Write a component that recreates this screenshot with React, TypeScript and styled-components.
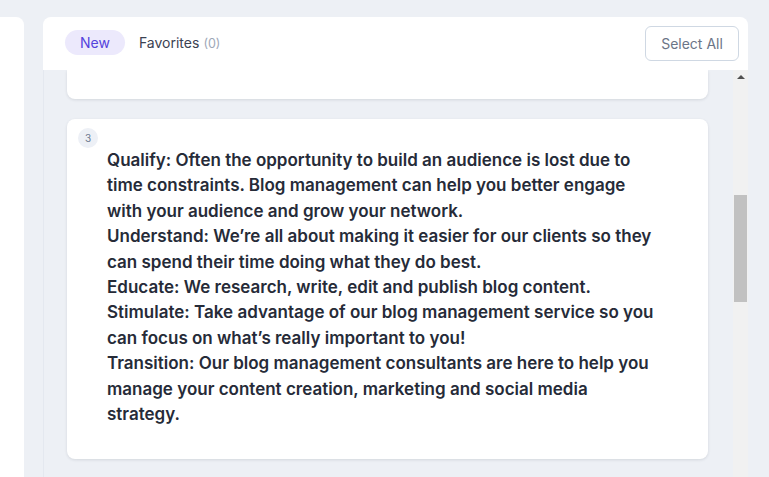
import { ReactElement } from 'react'
import styled, { createGlobalStyle } from 'styled-components'

const GlobalStyle = createGlobalStyle`
  html, body {
    margin: 0;
    padding: 0;
    background: #edf0f5;
    font-family: Inter, 'Noto Sans', sans-serif;
    overflow: hidden;
  }
`

const Page = styled.div`
  display: flex;
  gap: 19px;
  height: 477px;
  padding-top: 17px;
  box-sizing: border-box;
  background: #edf0f5;
`

const SidePanel = styled.aside`
  width: 24px;
  background: #fff;
  border-top-right-radius: 8px;
`

const MainPanel = styled.section`
  width: 705px;
  display: flex;
  flex-direction: column;
  min-height: 0;
`

const Header = styled.header`
  height: 53px;
  flex-shrink: 0;
  display: flex;
  align-items: center;
  padding: 0 9px 0 22px;
  background: #fff;
  border-radius: 8px 8px 0 0;
  box-sizing: border-box;
`

const Tab = styled.button<{ $active?: boolean }>`
  height: 25px;
  margin-bottom: 2px;
  padding: 0 ${(p) => (p.$active ? '15px' : '0')};
  margin-right: ${(p) => (p.$active ? '14px' : '0')};
  border: none;
  border-radius: 13px;
  background: ${(p) => (p.$active ? '#ece9fc' : 'transparent')};
  color: ${(p) => (p.$active ? '#5443dc' : '#3b4252')};
  font-family: Inter, sans-serif;
  font-size: 14px;
  cursor: pointer;
`

const Count = styled.span`
  color: #9ea8b8;
  font-size: 12.5px;
  margin-left: 4px;
`

const SelectAll = styled.button`
  margin-left: auto;
  margin-bottom: 1px;
  width: 94px;
  height: 35px;
  border: 1px solid #cfd8e3;
  border-radius: 6px;
  background: #fff;
  color: #6b7587;
  font-family: Inter, sans-serif;
  font-size: 14px;
`

const Body = styled.div`
  flex: 1;
  display: flex;
  min-height: 0;
  border-left: 1px solid #e4e8ef;
`

const List = styled.div`
  flex: 1;
  display: flex;
  flex-direction: column;
  gap: 20px;
  padding: 0 25px 0 23px;
  overflow: hidden;
`

const Card = styled.article<{ $cut?: boolean }>`
  flex-shrink: 0;
  background: #fff;
  border-radius: ${(p) => (p.$cut ? '0 0 8px 8px' : '8px')};
  box-shadow: 0 1px 3px rgba(30, 40, 60, 0.12);
  height: ${(p) => (p.$cut ? '29px' : 'auto')};
  padding: ${(p) => (p.$cut ? '0' : '9px 40px 32px 11px')};
  box-sizing: border-box;
`

const Index = styled.div`
  width: 20px;
  height: 20px;
  border-radius: 50%;
  background: #edf0f6;
  color: #6c7a90;
  font-size: 10px;
  display: flex;
  align-items: center;
  justify-content: center;
`

const Content = styled.div`
  margin-left: 29px;
  color: #262b38;
  font-family: Inter, sans-serif;
  font-weight: 600;
  font-size: 17px;
  line-height: 25.4px;
  letter-spacing: 0;
`

const Line = styled.span`
  display: block;
  white-space: nowrap;
`

const ScrollTrack = styled.div`
  width: 15px;
  background: #f1f1f1;
  display: flex;
  flex-direction: column;
  align-items: center;
`

const ScrollArrow = styled.div`
  margin-top: 5px;
  width: 0;
  height: 0;
  border-left: 4px solid transparent;
  border-right: 4px solid transparent;
  border-bottom: 4px solid #505050;
`

const ScrollThumb = styled.div`
  margin-top: 116px;
  width: 13px;
  height: 107px;
  background: #c1c1c1;
`

const lines = [
  'Qualify: Often the opportunity to build an audience is lost due to',
  'time constraints. Blog management can help you better engage',
  'with your audience and grow your network.',
  'Understand: We\u2019re all about making it easier for our clients so they',
  'can spend their time doing what they do best.',
  'Educate: We research, write, edit and publish blog content.',
  'Stimulate: Take advantage of our blog management service so you',
  'can focus on what\u2019s really important to you!',
  'Transition: Our blog management consultants are here to help you',
  'manage your content creation, marketing and social media',
  'strategy.',
]

const App = (): ReactElement => (
  <>
    <GlobalStyle />
    <Page>
      <SidePanel />
      <MainPanel>
        <Header>
          <Tab $active>New</Tab>
          <Tab>
            Favorites<Count>(0)</Count>
          </Tab>
          <SelectAll>Select All</SelectAll>
        </Header>
        <Body>
          <List>
            <Card $cut />
            <Card>
              <Index>3</Index>
              <Content>
                {lines.map((l, i) => (
                  <Line key={i}>{l}</Line>
                ))}
              </Content>
            </Card>
          </List>
          <ScrollTrack>
            <ScrollArrow />
            <ScrollThumb />
          </ScrollTrack>
        </Body>
      </MainPanel>
    </Page>
  </>
)

export default App
